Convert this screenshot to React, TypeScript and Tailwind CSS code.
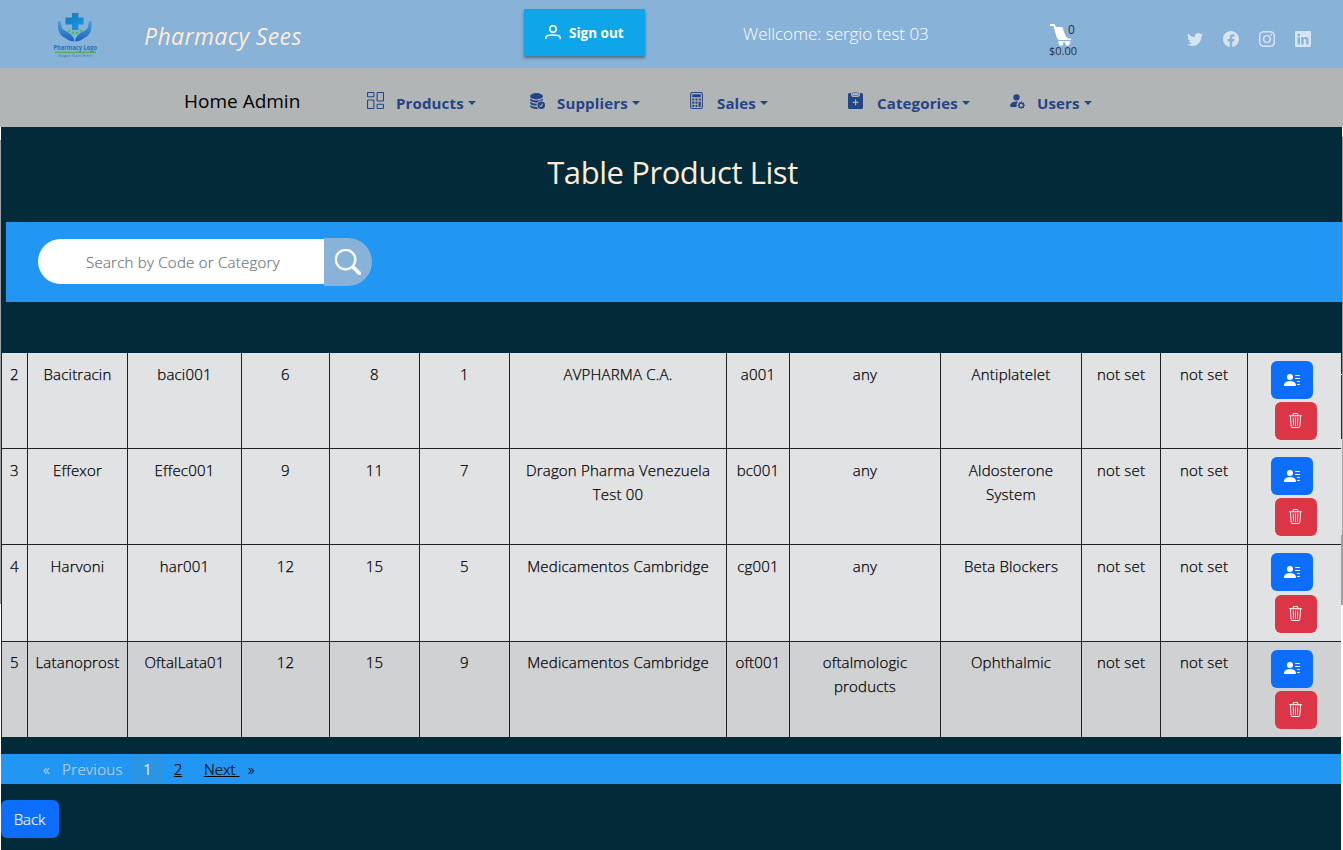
import React from "react";
import {
  BsCalculator,
  BsColumnsGap,
  BsDatabaseFillCheck,
  BsFacebook,
  BsInstagram,
  BsLinkedin,
  BsPersonFillGear,
  BsPersonLinesFill,
  BsSearch,
  BsTrash3,
  BsTwitter,
} from "react-icons/bs";

function Logo() {
  return (
    <svg width="52" height="50" viewBox="-2 0 52 50" className="shrink-0 overflow-visible">
      <defs>
        <linearGradient id="hand" x1="0" y1="0" x2="0" y2="1">
          <stop offset="0" stopColor="#4a9fe0" />
          <stop offset="1" stopColor="#1b66b8" />
        </linearGradient>
        <linearGradient id="cross" x1="0" y1="0" x2="1" y2="1">
          <stop offset="0" stopColor="#1b72c4" />
          <stop offset="1" stopColor="#12a0de" />
        </linearGradient>
      </defs>
      <path d="M20 1h6.500v4.500h5v7h-5v5.500H20v-5.500h-6.500v-7H20z" fill="url(#cross)" />
      <path d="M6 9.500c2-1.500 3 .5 3.500 4.500 0 3 2 4 5 5.500 4 2 7.500 5 8 10-6 0-8-3-11-4.500C6 22 5.500 15 6 9.500z" fill="url(#hand)" />
      <path d="M39.500 9.500c-2-1.500-3 .5-3.500 4.500 0 3-2 4-5 5.500-4 2-7.500 5-8 10 6 0 8-3 11-4.500 5.500-3 6-10 5.500-15.500z" fill="url(#hand)" />
      <circle cx="17" cy="18.800" r="1.300" fill="#4cc43c" />
      <circle cx="21" cy="21" r="1.400" fill="#4cc43c" />
      <circle cx="25" cy="21" r="1.400" fill="#4cc43c" />
      <circle cx="29" cy="18.800" r="1.300" fill="#4cc43c" />
      <text x="1.500" y="38" fontSize="6.800" textLength="43.500" lengthAdjust="spacingAndGlyphs" fontWeight="700" fill="#2672b8" fontFamily="Open Sans, sans-serif">Pharmacy Logo</text>
      <rect x="3" y="39.600" width="41" height="1.500" fill="#4fae58" />
      <text x="6" y="45.300" fontSize="3.800" textLength="34" lengthAdjust="spacingAndGlyphs" fontWeight="600" fill="#4f86ba" fontFamily="Open Sans, sans-serif">Slogan Goes Here</text>
    </svg>
  );
}

function UserOutline() {
  return (
    <svg width="16" height="14" viewBox="0 0 16 14" fill="none" stroke="white" strokeWidth="1.500">
      <circle cx="8" cy="4" r="3.200" />
      <path d="M.8 14v-1.500c0-1.600 2.500-2.500 7.200-2.500s7.200.9 7.200 2.500V14" />
    </svg>
  );
}

function Cart() {
  return (
    <svg width="22" height="22" viewBox="0 0 22 22" fill="white">
      <path d="M0 0h4.500l1.300 3h6.700c1.500 6 3 9 5.500 11.500H21V16H8.500L6.500 13 3.500 2H0z" />
      <path d="M8 17.200h12.500v1.200H8z" />
      <circle cx="11" cy="19.500" r="2.200" />
      <circle cx="17.500" cy="19.500" r="2.200" />
    </svg>
  );
}

function ClipboardPlus() {
  return (
    <svg width="15" height="17" viewBox="0 0 15 17">
      <path fill="#234487" fillRule="evenodd" d="M1.500 1H3v1.500A2.500 2.500 0 0 0 5.500 5h4A2.500 2.500 0 0 0 12 2.500V1h1.500A1.500 1.500 0 0 1 15 2.500v13a1.500 1.500 0 0 1-1.500 1.500h-12A1.500 1.500 0 0 1 0 15.500v-13A1.500 1.500 0 0 1 1.500 1zM7 7.500v2.300H4.700v1.200H7v2.300h1.200V11h2.300V9.800H8.200V7.500z" />
      <rect x="4.500" y=".5" width="6" height="3" rx="1.200" fill="none" stroke="#6079a5" />
    </svg>
  );
}

const menus = [
  { label: "Products", icon: <BsColumnsGap size={17} />, width: "w-[161px]", iconBox: "w-[29px]" },
  { label: "Suppliers", icon: <BsDatabaseFillCheck size={17} />, width: "w-[160px]", iconBox: "w-[29px]" },
  { label: "Sales", icon: <BsCalculator size={17} />, width: "w-[160px]", iconBox: "w-[29px]" },
  { label: "Categories", icon: <ClipboardPlus />, width: "w-[160px]", iconBox: "w-[29px]" },
  { label: "Users", icon: <BsPersonFillGear size={17} />, width: "w-[100px]", iconBox: "w-[29px]" },
];

const rows = [
  ["2", "Bacitracin", "baci001", "6", "8", "1", "AVPHARMA C.A.", "a001", "any", "Antiplatelet", "not set", "not set"],
  ["3", "Effexor", "Effec001", "9", "11", "7", "Dragon Pharma Venezuela Test 00", "bc001", "any", "Aldosterone System", "not set", "not set"],
  ["4", "Harvoni", "har001", "12", "15", "5", "Medicamentos Cambridge", "cg001", "any", "Beta Blockers", "not set", "not set"],
  ["5", "Latanoprost", "OftalLata01", "12", "15", "9", "Medicamentos Cambridge", "oft001", "oftalmologic products", "Ophthalmic", "not set", "not set"],
];

const grid =
  "grid grid-cols-[26px_100px_114px_88px_90px_90px_217px_63px_151px_141px_79px_87px_93px]";

const rightEdge = [
  "h-[10px] bg-[#032a38] border-white",
  "h-[85px] bg-[#032a38] border-[#909496]",
  "h-[80px] bg-[#2196f3] border-[#909496]",
  "h-[72px] bg-[#032a38] border-[#909496]",
  "h-px bg-white border-[#909496]",
  "h-[64px] bg-[#252a2d] border-[#a5a5a5]",
  "h-[96px] bg-[#e1e2e4] border-[#a5a5a5]",
  "h-[70px] bg-[#a0a0a0] border-[#a0a0a0]",
  "h-[245px] bg-white border-white",
];

export default function App() {
  return (
    <div className="h-[850px] w-[1343px] overflow-hidden bg-white font-['Open_Sans','Noto_Sans',sans-serif] text-[15px] font-light leading-6 text-black">
      <header className="flex h-[68px] items-start bg-[#88b2d8]">
        <div className="w-[144px] pl-[50px] pt-[12px]"><Logo /></div>
        <div className="w-[380px] whitespace-nowrap pt-[21px] text-[23px] font-normal italic leading-[30px] tracking-[0.38px] text-[#ffebd6]">Pharmacy Sees</div>
        <div className="w-[219px] pt-[9px]">
          <button className="flex h-[47px] w-[121px] items-center bg-[#0fa5e9] pb-0.5 pl-[21px] text-[13.500px] font-bold text-white shadow-[0_2px_3px_rgba(0,0,0,0.4)]">
            <UserOutline />
            <span className="pl-2 pt-[3px]">Sign out</span>
          </button>
        </div>
        <div className="w-[307px] whitespace-nowrap pt-[22px] text-[17px] font-light tracking-[-0.03px] text-white">Wellcome: sergio test 03</div>
        <div className="w-[137px] pt-[24px] text-[#303030]">
          <div className="flex h-[21px]">
            <div className="w-[18px] shrink-0"><Cart /></div>
            <span className="text-[12px] font-normal leading-3">0</span>
          </div>
          <div className="-ml-px text-[11px] font-normal leading-3">$0.00</div>
        </div>
        <div className="flex gap-5 pt-[31px] text-[#d7e5f3]">
          <BsTwitter size={16} />
          <BsFacebook size={16} />
          <BsInstagram size={16} />
          <BsLinkedin size={16} />
        </div>
      </header>

      <nav className="flex h-[59px] items-start bg-[#b2b5b6]">
        <div className="w-[367px] whitespace-nowrap pl-[184px] pt-[21px] text-[19px] font-normal">Home Admin</div>
        {menus.map((m) => (
          <div key={m.label} className={`flex items-start whitespace-nowrap pt-[23px] text-[#234487] ${m.width}`}>
            <span className={`pt-px ${m.iconBox}`}>{m.icon}</span>
            <span className="text-[15px] font-bold tracking-[0.15px]">{m.label}</span>
            <span className="ml-1 mt-[10px] border-x-4 border-t-4 border-x-transparent border-t-[#234487]" />
          </div>
        ))}
      </nav>

      <div className="flex h-[723px]">
        <div className="w-px shrink-0">
          <div className="h-[13px] bg-white" />
          <div className="h-[464px] bg-[#9aa0a3]" />
        </div>

        <main className="w-[1340px] bg-[#032a38]">
          <h1 className="h-[95px] pl-[3px] pt-[25px] text-center text-[31px] font-normal leading-10 tracking-[-0.43px] text-[#ffebd6]">Table Product List</h1>

          <div className="ml-[5px] flex h-[80px] bg-[#2196f3] pl-8 pt-4">
            <div className="mt-px flex h-[45px] w-[286px] items-center rounded-l-full rounded-r-md bg-white pl-12 tracking-[0.25px] text-[#6c757d] [-webkit-text-stroke:0.2px]">Search by Code or Category</div>
            <button className="flex size-12 items-center justify-center rounded-r-full bg-[#88b2d8] text-white">
              <BsSearch size={26} stroke="currentColor" strokeWidth={0.4} />
            </button>
          </div>

          <div className="mt-[51px] border-l border-[#1c2226]">
            {rows.map((row, r) => (
              <div key={row[0]} className={`${grid} border-b border-[#1c2226] ${r === 2 ? "h-[97px]" : "h-[96px]"} ${r === 3 ? "bg-[#d0d1d3]" : "bg-[#e1e2e4]"}`}>
                {row.map((cell, i) => (
                  <div key={i} className={`border-r border-[#1c2226] px-[7px] text-center tracking-[0.2px] [-webkit-text-stroke:0.25px] ${r === 3 ? "pt-2" : "pt-[9px]"}`}>{cell}</div>
                ))}
                <div className={`flex flex-col pl-[23px] pt-2 ${r === 2 ? "gap-1" : "gap-[3px]"}`}>
                  <button className={`flex h-[38px] w-[42px] items-center justify-center rounded-md bg-[#0d6efd] text-white ${r === 3 ? "pb-0.5" : ""}`}><BsPersonLinesFill size={16} /></button>
                  <button className="ml-1 flex h-[38px] w-[42px] items-center justify-center rounded-md bg-[#dc3545] pb-0.5 pr-px text-white"><BsTrash3 size={15} /></button>
                </div>
              </div>
            ))}
          </div>

          <div className="mt-4 flex h-[30px] items-center whitespace-nowrap bg-[#2196f3] pl-[42px] [-webkit-text-stroke:0.2px]">
            <span className="w-[19px] text-[#c9d2d8]">«</span>
            <span className="w-[70px] tracking-[0.4px] text-[#c9d2d8]">Previous</span>
            <span className="flex h-full w-[31px] items-center justify-center bg-[#2a95e5] text-white">1</span>
            <span className="w-[30px] text-center underline">2</span>
            <span className="ml-[11px] w-[44px] whitespace-pre underline">Next </span>
            <span>»</span>
          </div>

          <button className="mt-4 h-[38px] w-[58px] rounded-md bg-[#0d6efd] pr-px text-center text-white [-webkit-text-stroke:0.2px]">Back</button>
        </main>

        <div className="w-[2px] shrink-0">
          {rightEdge.map((segment) => (
            <div key={segment} className={`border-r ${segment}`} />
          ))}
        </div>
      </div>
    </div>
  );
}
